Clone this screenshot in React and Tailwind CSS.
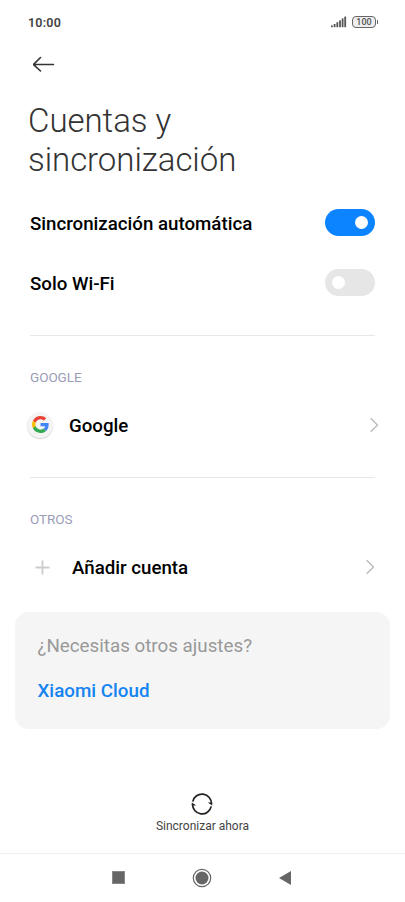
import React from "react";

function StatusBar() {
  return (
    <div className="flex h-11 items-center justify-between pl-7 pr-[27px] text-[#444]">
      <span className="pt-px text-[12.5px] font-semibold leading-4 tracking-[0.2px]">10:00</span>
      <div className="flex items-center gap-[5px]">
        <svg width="16" height="12" viewBox="0 0 16 12" fill="#555">
          <rect x="0" y="9.5" width="1.8" height="1.7" />
          <rect x="2.7" y="8" width="1.8" height="3.2" />
          <rect x="5.4" y="6.2" width="1.8" height="5" />
          <rect x="8.1" y="4.4" width="1.8" height="6.8" />
          <rect x="10.7" y="2.4" width="1.8" height="8.8" />
          <rect x="13.3" y="0.6" width="1.8" height="10.6" />
        </svg>
        <div className="flex items-center gap-px">
          <div className="flex h-3 w-6 items-center justify-center rounded-[4px] border-[1.5px] border-[#666] bg-[#eee] pt-px text-[9px] font-medium leading-none text-[#555]">
            100
          </div>
          <div className="h-1 w-px bg-[#666]" />
        </div>
      </div>
    </div>
  );
}

function Toggle({ on }) {
  return (
    <div
      className={
        on
          ? "mb-px flex h-[27px] w-[50px] items-center justify-end rounded-full bg-[#0d84ff] pr-[7px]"
          : "mb-px flex h-[27px] w-[50px] items-center rounded-full bg-[#e6e6e6] pl-[7px]"
      }
    >
      <div className="h-[13px] w-[13px] rounded-full bg-white" />
    </div>
  );
}

function SettingRow({ label, on }) {
  return (
    <div className="flex h-[60px] items-center justify-between px-[30px]">
      <span className="pt-0.5 text-[18.7px] font-medium">{label}</span>
      <Toggle on={on} />
    </div>
  );
}

function Chevron() {
  return (
    <svg width="9" height="16" viewBox="0 0 9 16" fill="none" stroke="#b8b8b8" strokeWidth="1.3">
      <path d="M.7 1.2 7.5 8 .7 14.8" />
    </svg>
  );
}

function GoogleIcon() {
  return (
    <div className="mb-px flex h-[26px] w-[26px] items-center justify-center rounded-full bg-[#f4f4f4] shadow-[0_1px_1px_#d5d5d5]">
      <svg width="17" height="17" viewBox="0 0 48 48">
        <path fill="#EA4335" d="M24 9.5c3.54 0 6.71 1.22 9.21 3.6l6.85-6.85C35.9 2.38 30.47 0 24 0 14.62 0 6.51 5.38 2.56 13.22l7.98 6.19C12.43 13.72 17.74 9.5 24 9.5z" />
        <path fill="#4285F4" d="M46.98 24.55c0-1.57-.15-3.09-.38-4.55H24v9.02h12.94c-.58 2.96-2.26 5.48-4.78 7.18l7.73 6c4.51-4.18 7.09-10.36 7.09-17.65z" />
        <path fill="#FBBC05" d="M10.53 28.59A14.5 14.5 0 0 1 9.77 24c0-1.6.27-3.14.76-4.59l-7.98-6.19A23.9 23.9 0 0 0 0 24c0 3.88.92 7.54 2.56 10.78l7.97-6.19z" />
        <path fill="#34A853" d="M24 48c6.48 0 11.93-2.13 15.89-5.81l-7.73-6c-2.15 1.45-4.92 2.3-8.16 2.3-6.26 0-11.57-4.22-13.47-9.91l-7.98 6.19C6.51 42.62 14.62 48 24 48z" />
      </svg>
    </div>
  );
}

function Divider() {
  return <div className="mx-[30px] h-px bg-[#e8e8e8]" />;
}

function SectionLabel({ children }) {
  return <div className="mt-[31px] px-[30px] text-[13.5px] leading-5 tracking-[-0.05px] text-[#9a9db8]">{children}</div>;
}

function NavBar() {
  return (
    <div className="h-[49px] border-t border-[#f0f0f0]">
      <div className="flex h-[47px] items-center pl-[112px]">
        <div className="h-[13px] w-[13px] border border-[#888] bg-[#666]" />
        <svg className="ml-[67px]" width="20" height="20" viewBox="0 0 20 20">
          <circle cx="10" cy="10" r="8.7" fill="none" stroke="#666" strokeWidth="1.2" />
          <circle cx="10" cy="10" r="6.5" fill="#666" />
        </svg>
        <svg className="ml-[67px]" width="13" height="14" viewBox="0 0 13 14">
          <path d="M0 7 12 0v14z" fill="#666" />
        </svg>
      </div>
    </div>
  );
}

export default function App() {
  return (
    <div className="flex h-[902px] w-[405px] flex-col overflow-hidden bg-white font-['Roboto',sans-serif] text-black">
      <StatusBar />
      <div className="flex h-10 items-center pl-[33px]">
        <svg width="22" height="16" viewBox="0 0 22 16" fill="none" stroke="#333" strokeWidth="1.6" strokeLinecap="round" strokeLinejoin="round">
          <path d="M20.5 8.5H1M7.5 1.5l-7 7 7 6.5" />
        </svg>
      </div>
      <h1 className="mt-[17px] h-[92px] pl-7 text-[33px] font-light leading-[39px] tracking-[-0.05px] text-[#333]">
        Cuentas y
        <br />
        sincronización
      </h1>
      <SettingRow label="Sincronización automática" on />
      <SettingRow label="Solo Wi-Fi" />
      <div className="h-[22px]" />
      <Divider />
      <SectionLabel>GOOGLE</SectionLabel>
      <div className="mt-2 flex h-[60px] items-center pl-[27px] pr-[26px]">
        <GoogleIcon />
        <span className="ml-4 grow pt-0.5 text-[18.7px] font-medium">Google</span>
        <Chevron />
      </div>
      <div className="h-[22px]" />
      <Divider />
      <SectionLabel>OTROS</SectionLabel>
      <div className="mt-2 flex h-[60px] items-center pl-[35px] pr-[30px]">
        <svg width="15" height="15" viewBox="0 0 15 15" stroke="#ccc" strokeWidth="1.8">
          <path d="M7.5 .5v14M.5 7.5h14" />
        </svg>
        <span className="ml-[22px] grow pt-0.5 text-[18.7px] font-medium">Añadir cuenta</span>
        <Chevron />
      </div>
      <div className="mx-[15px] mt-[15px] h-[117px] rounded-[14px] bg-[#f5f5f5] px-[22.5px] pt-[22px]">
        <div className="text-[18.8px] leading-6 text-[#999]">¿Necesitas otros ajustes?</div>
        <div className="mt-[21px] text-[18.8px] font-medium leading-6 text-[#1684f0]">Xiaomi Cloud</div>
      </div>
      <div className="mt-auto flex h-[60px] flex-col items-center">
        <svg className="mr-px" width="22" height="22" viewBox="0 0 22 22" fill="none" stroke="#222" strokeWidth="1.7">
          <path d="M1.8 8.6A9.4 9.4 0 0 1 20.4 11M20.2 13.4A9.4 9.4 0 0 1 1.6 11" />
          <path d="M16.8 9.4h4.4v3.2zM5.2 12.6H.8V9.4z" fill="#222" stroke="none" />
        </svg>
        <span className="mt-[3px] text-[12px] leading-4 text-[#444]">Sincronizar ahora</span>
      </div>
      <NavBar />
    </div>
  );
}
